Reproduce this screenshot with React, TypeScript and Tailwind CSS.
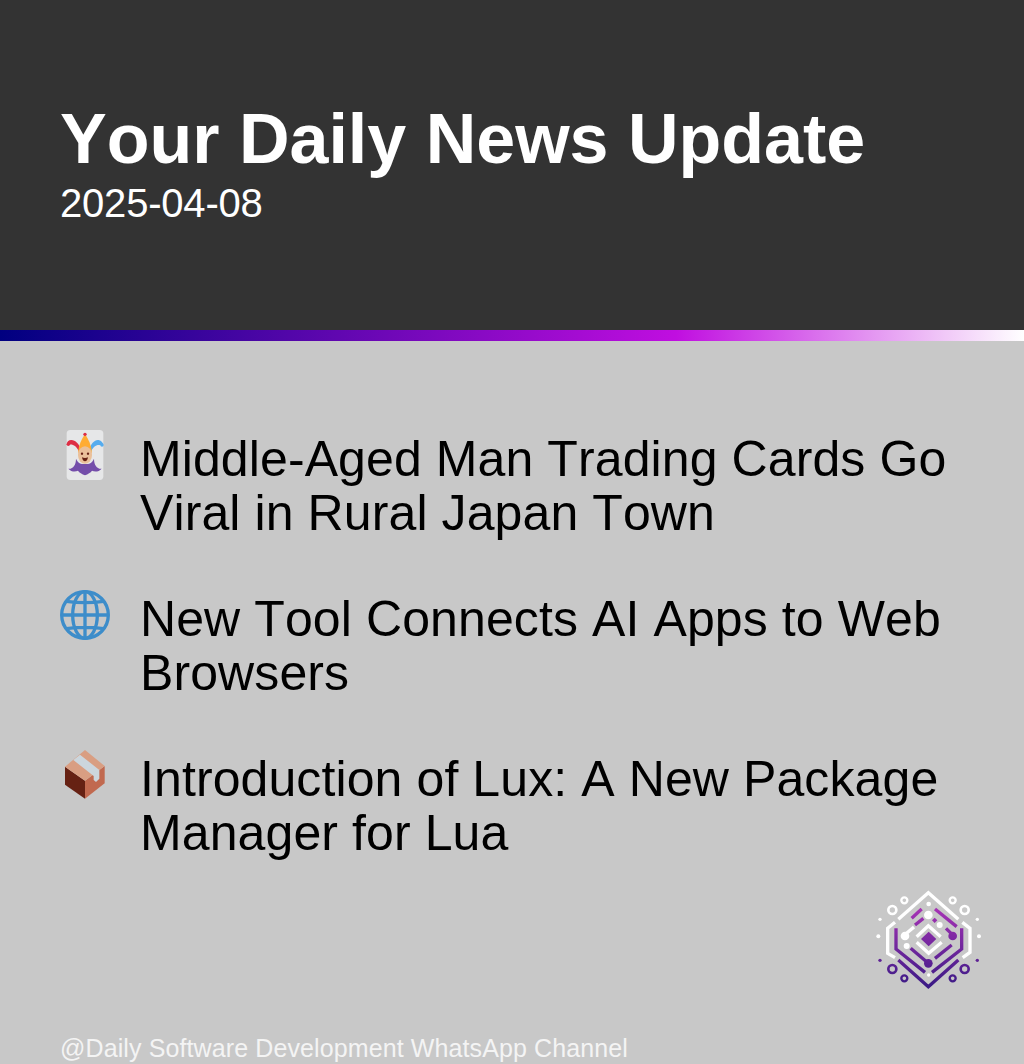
const items = [
  { icon: <JokerIcon />, lines: "Middle-Aged Man Trading Cards Go Viral in Rural Japan Town" },
  { icon: <GlobeIcon />, lines: "New Tool Connects AI Apps to Web Browsers" },
  { icon: <PackageIcon />, lines: "Introduction of Lux: A New Package Manager for Lua" },
];

function JokerIcon() {
  return (
    <svg viewBox="30 30 150 150" className="h-[50px] w-[50px]">
      <rect x="50" y="30" width="110" height="150" rx="11" fill="#e6e7e8" />
      <path d="M92 88C88 72 76 60 64 60C56 60 50 66 50 74L60 74C66 72 82 78 88 98Z" fill="#dd2e44" />
      <path d="M118 88C122 72 134 58 146 60C154 62 160 68 160 76L150 76C144 72 128 78 122 98Z" fill="#55acee" />
      <circle cx="55" cy="73" r="5" fill="#dd2e44" />
      <circle cx="156" cy="75" r="5" fill="#55acee" />
      <path d="M105 42C94 58 86 76 84 98L126 98C124 76 116 58 105 42Z" fill="#ffac33" />
      <circle cx="105" cy="43" r="5" fill="#dd2e44" />
      <path d="M55 146C68 148 78 136 78 116C84 130 92 132 105 132C118 132 126 130 132 116C132 136 142 148 155 146C146 156 134 156 126 152C122 158 114 162 105 166C96 162 88 158 84 152C76 156 64 156 55 146Z" fill="#744eaa" />
      <ellipse cx="105" cy="105" rx="21" ry="26" fill="#eac09a" />
      <circle cx="96" cy="101" r="3.5" fill="#662113" />
      <circle cx="114" cy="101" r="3.5" fill="#662113" />
      <path d="M96 112Q105 116 114 112Q112 124 105 124Q98 124 96 112Z" fill="#662113" />
    </svg>
  );
}

function GlobeIcon() {
  return (
    <svg viewBox="30 30 150 150" className="h-[50px] w-[50px]" fill="none" stroke="#3d8dca" strokeWidth="10">
      <circle cx="105" cy="105" r="70" />
      <ellipse cx="105" cy="105" rx="37" ry="70" />
      <path d="M105 35V175M35 105H175M49 64Q105 72 161 64M49 146Q105 138 161 146" />
    </svg>
  );
}

function PackageIcon() {
  return (
    <svg viewBox="30 30 150 150" className="h-[50px] w-[50px]">
      <path d="M45 80L105 122V176L45 134Z" fill="#662113" />
      <path d="M105 122L164 78V130L105 176Z" fill="#c1694f" />
      <path d="M45 80L105 30L164 78L105 122Z" fill="#d99e82" />
      <path d="M70 60L90 44L148 90V116L138 126L131 120V108Z" fill="#ccd6dd" />
    </svg>
  );
}

function Logo() {
  return (
    <svg viewBox="0 0 360 330" className="h-[110px] w-[120px]" fill="none" strokeWidth="10">
      <defs>
        <linearGradient id="logoPurple" gradientUnits="userSpaceOnUse" x1="0" y1="70" x2="0" y2="305">
          <stop offset="0" stopColor="#a633b5" />
          <stop offset="1" stopColor="#3b1a85" />
        </linearGradient>
      </defs>
      <g stroke="#ffffff">
        <path d="M85 103L175 23L265 103" />
        <path d="M75 112L53 130V205L75 218" />
        <path d="M277 112L300 130V202L278 218" />
        <path d="M140 155L175 122L212 155" />
        <path d="M140 172L176 205L215 172" />
        <path d="M100 153L132 126" />
        <circle cx="67" cy="75" r="12" strokeWidth="8" />
        <circle cx="103" cy="46" r="9" strokeWidth="7" />
        <circle cx="248" cy="46" r="9" strokeWidth="7" />
        <circle cx="284" cy="75" r="12" strokeWidth="8" />
      </g>
      <g fill="#ffffff">
        <circle cx="176" cy="57" r="7" />
        <circle cx="30" cy="103" r="5" />
        <circle cx="25" cy="154" r="6" />
        <circle cx="322" cy="103" r="5" />
        <circle cx="327" cy="154" r="6" />
        <circle cx="175" cy="90" r="13" />
        <circle cx="105" cy="153" r="13" />
        <circle cx="209" cy="120" r="9" />
        <circle cx="110" cy="183" r="9" />
      </g>
      <g stroke="url(#logoPurple)">
        <path d="M125 100L155 72" />
        <path d="M195 72L260 125" />
        <path d="M135 120L160 100" />
        <path d="M228 130L250 152" />
        <path d="M78 130V192L165 262" />
        <path d="M275 130V192L186 262" />
        <path d="M122 190L175 235" />
        <path d="M195 220L245 180" />
        <path d="M85 225L175 305L265 225" />
        <circle cx="67" cy="252" r="12" strokeWidth="8" />
        <circle cx="103" cy="280" r="9" strokeWidth="7" />
        <circle cx="248" cy="280" r="9" strokeWidth="7" />
        <circle cx="284" cy="252" r="12" strokeWidth="8" />
      </g>
      <g fill="url(#logoPurple)">
        <path d="M176 140L199 162L176 184L153 162Z" />
        <path d="M194 98L202 106L194 114L186 106Z" />
        <circle cx="248" cy="153" r="13" />
        <circle cx="175" cy="235" r="13" />
        <circle cx="30" cy="226" r="5" />
        <circle cx="322" cy="226" r="5" />
      </g>
      <circle cx="176" cy="270" r="5" fill="#ffffff" />
    </svg>
  );
}

export default function App() {
  return (
    <div className="flex h-[1064px] w-[1024px] flex-col overflow-hidden bg-[#c8c8c8] font-['Liberation_Sans',sans-serif] [font-kerning:none]">
      <header className="h-[330px] bg-[#333333] px-[60px] pt-[98px] text-white">
        <h1 className="text-[70px] leading-[82px] font-bold">Your Daily News Update</h1>
        <p className="text-[40px] leading-[46px] tracking-[-0.2px]">2025-04-08</p>
      </header>
      <div className="h-[11px] bg-[linear-gradient(to_right,#000080,#c00ee0_66%,#ffffff)]" />
      <ul className="flex flex-col gap-[52px] pt-[91px] pr-[60px] pl-[60px]">
        {items.map((item) => (
          <li key={item.lines} className="flex">
            <div className="-mt-[2px] w-[80px] shrink-0">{item.icon}</div>
            <p className="text-[50px] leading-[54px] tracking-[0.1px] text-black">{item.lines}</p>
          </li>
        ))}
      </ul>
      <div className="mt-[25px] flex justify-end pr-[34px]">
        <Logo />
      </div>
      <p className="mt-[39px] pl-[60px] text-[25px] leading-[29px] tracking-[0.11px] text-[#f4f4f4]">
        @Daily Software Development WhatsApp Channel
      </p>
    </div>
  );
}
